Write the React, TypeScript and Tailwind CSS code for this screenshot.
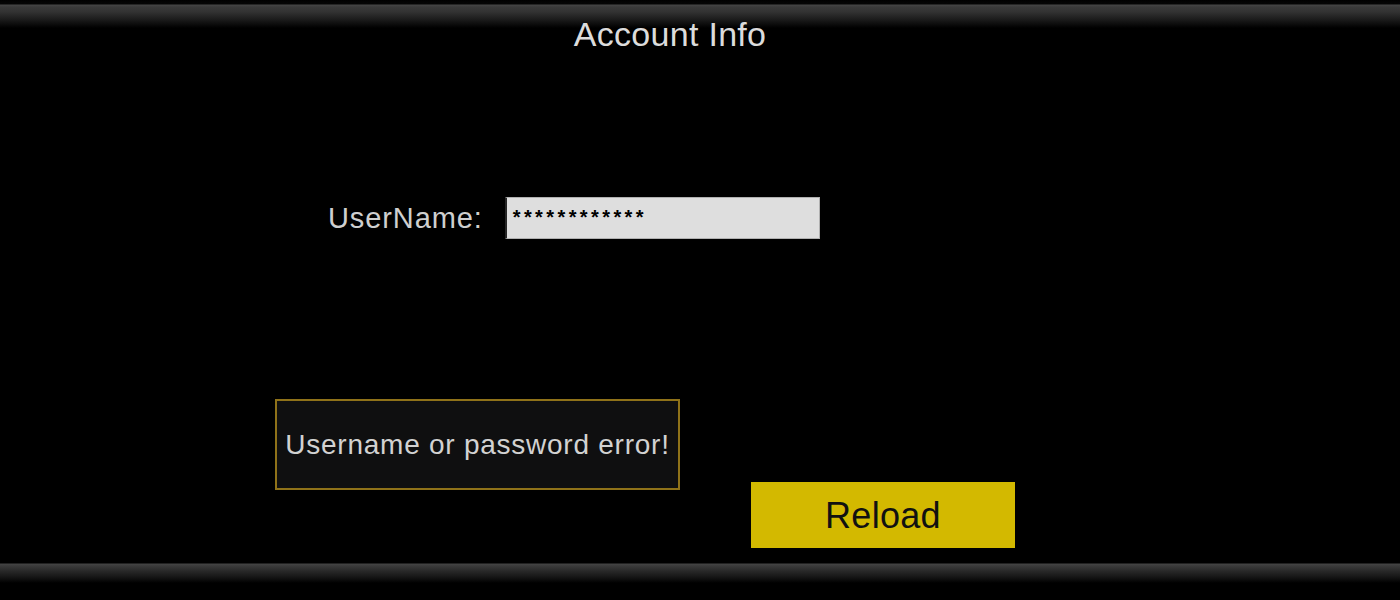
import React from "react";

const font = { fontFamily: '"Liberation Sans", Arial, sans-serif' };

const App: React.FC = () => {
  return (
    <div
      className="w-[1400px] h-[600px] bg-black flex flex-col overflow-hidden"
      style={font}
    >
      {/* Header bar */}
      <div className="h-[60px] shrink-0 bg-[linear-gradient(to_bottom,#000_0px,#050505_4px,#454545_5px,#3a3a3a_7px,#323232_12px,#1a1a1a_20px,#000_28px,#000_100%)]">
        <div className="pt-[15px] pr-[60px] text-center text-[34px] leading-[38px] tracking-[0.3px] text-[#dcdcdc]">
          Account Info
        </div>
      </div>

      {/* Content */}
      <div className="flex-1 flex flex-col">
        <div className="mt-[137px] ml-[328px] flex items-center h-[42px]">
          <span className="text-[29px] tracking-[0.9px] text-[#cfcfcf] leading-none">
            UserName:
          </span>
          <div className="ml-[22px] w-[315px] h-[42px] bg-[#dedede] border border-[#b0b0b0] border-l-[#262626] border-l-2 flex items-center pl-[6px]">
            <span className="text-[20px] font-bold text-black tracking-[3.4px] leading-none -mt-[2px]">
              ************
            </span>
          </div>
        </div>

        <div className="mt-[160px] ml-[275px] flex items-start">
          <div className="w-[405px] h-[91px] bg-[#0f0f10] border-2 border-[color:#8f7219] flex items-center justify-center">
            <span className="text-[28px] tracking-[0.75px] text-[#d2d2d2] leading-none">
              Username or password error!
            </span>
          </div>
          <button className="ml-[71px] mt-[83px] w-[264px] h-[66px] bg-[#d3b900] flex items-center justify-center">
            <span className="text-[36px] tracking-[0.3px] leading-none text-[#111] mt-[2px]">Reload</span>
          </button>
        </div>
      </div>

      {/* Footer bar */}
      <div className="h-[40px] shrink-0 bg-[linear-gradient(to_bottom,#000_0px,#000_3px,#444_4px,#3a3a3a_6px,#2c2c2c_10px,#161616_17px,#000_23px,#000_100%)]" />
    </div>
  );
};

export default App;
